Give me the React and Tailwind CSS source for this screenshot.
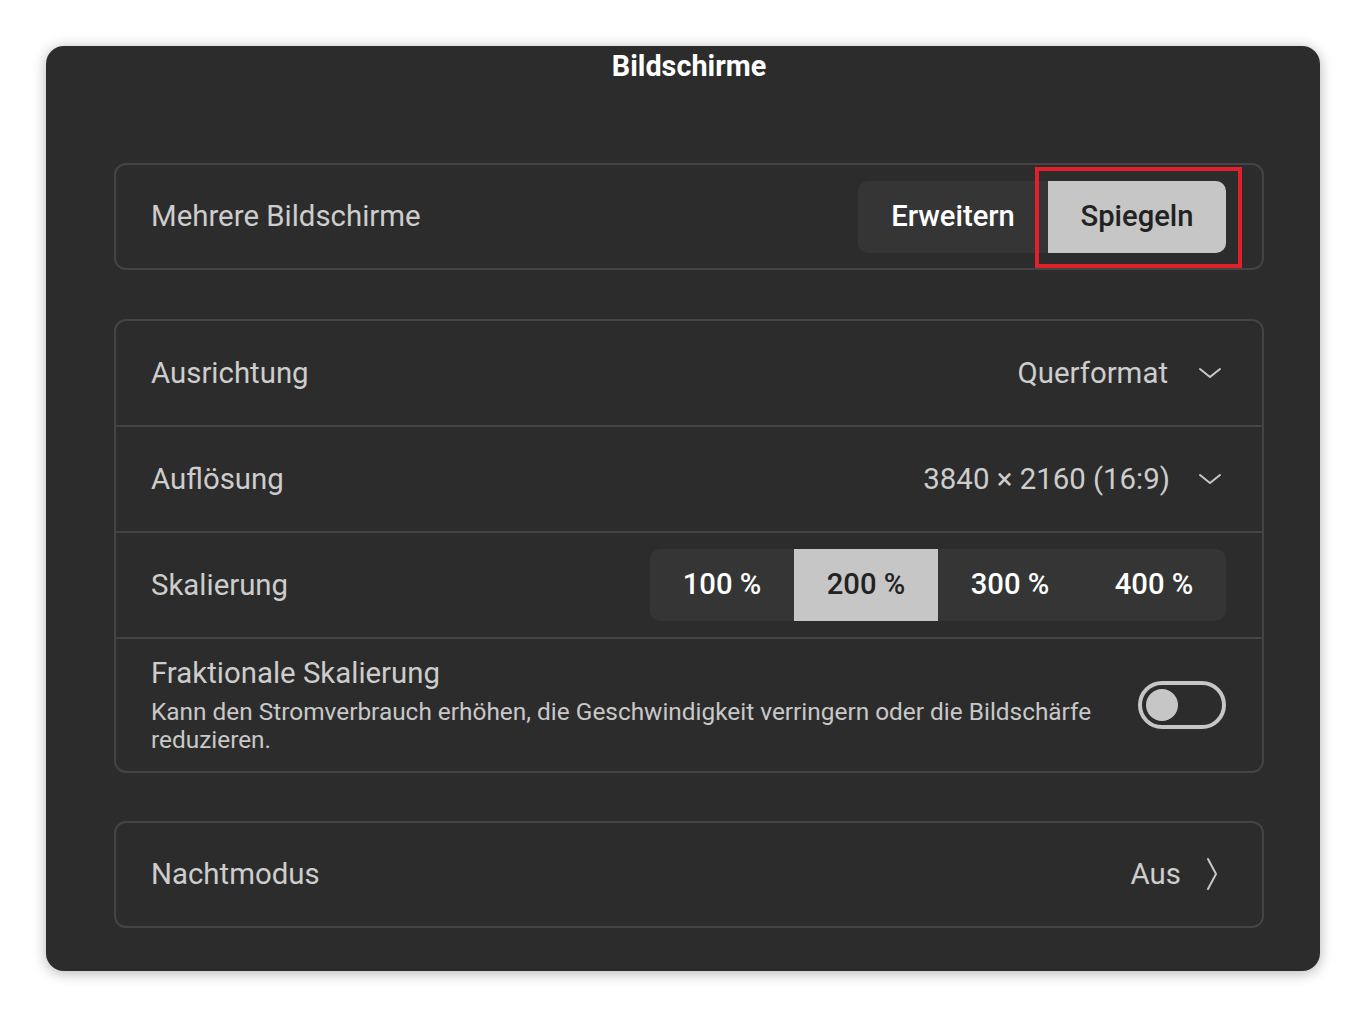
const ChevronDown = () => (
  <svg width="24" height="14" viewBox="0 0 24 14" fill="none" className="shrink-0">
    <path d="M2 3 L12 11 L22 3" stroke="#c8c8c8" strokeWidth="2" strokeLinecap="round" strokeLinejoin="round" />
  </svg>
);

const ChevronRight = () => (
  <svg width="14" height="34" viewBox="0 0 14 34" fill="none" className="shrink-0">
    <path d="M3 2 L11 17 L3 32" stroke="#c8c8c8" strokeWidth="2" strokeLinecap="round" strokeLinejoin="round" />
  </svg>
);

const Row = ({ label, children, last }) => (
  <div className={`h-[106px] flex items-center justify-between pl-[35px] pr-[36px] ${last ? '' : 'border-b-2 border-[#444444]'}`}>
    <span className="text-[29.4px] text-[#cdcdcd]">{label}</span>
    {children}
  </div>
);

const scales = ['100 %', '200 %', '300 %', '400 %'];

export default function App() {
  return (
    <div className="min-h-[1018px] bg-white pt-[46px] px-[46px]" style={{ fontFamily: 'Roboto, "Noto Sans", sans-serif' }}>
      <div className="w-[1274px] h-[925px] bg-[#2c2c2c] rounded-[18px] shadow-[0_2px_14px_rgba(0,0,0,0.3)] flex flex-col pl-[68px] pr-[56px]">
        <div className="h-[42px] flex items-center justify-center">
          <span className="text-[28.8px] font-bold text-white">Bildschirme</span>
        </div>

        <div className="mt-[75px] border-2 border-[#444444] rounded-[12px] h-[107px] flex items-center justify-between pl-[35px] pr-[36px]">
          <span className="text-[29.4px] text-[#cdcdcd]">Mehrere Bildschirme</span>
          <div className="relative flex h-[72px] rounded-[10px] bg-[#353535]">
            <div className="w-[190px] flex items-center justify-center text-[29.2px] font-medium text-white">Erweitern</div>
            <div className="w-[178px] flex items-center justify-center text-[29.2px] font-medium text-[#222222] bg-[#c6c6c6] rounded-r-[10px]">Spiegeln</div>
            <div className="absolute left-[177px] top-[-14px] w-[207px] h-[101px] border-4 border-[#e0202a]" />
          </div>
        </div>

        <div className="mt-[49px] border-2 border-[#444444] rounded-[12px] flex flex-col">
          <Row label="Ausrichtung">
            <div className="flex items-center gap-[30px] pr-[4px]">
              <span className="text-[29.4px] text-[#cdcdcd]">Querformat</span>
              <ChevronDown />
            </div>
          </Row>
          <Row label="Auflösung">
            <div className="flex items-center gap-[28px] pr-[4px]">
              <span className="text-[29.4px] text-[#cdcdcd]">3840 × 2160 (16:9)</span>
              <ChevronDown />
            </div>
          </Row>
          <Row label="Skalierung">
            <div className="flex h-[72px] rounded-[10px] bg-[#353535] overflow-hidden">
              {scales.map((s) => (
                <div
                  key={s}
                  className={`w-[144px] flex items-center justify-center text-[29.2px] font-medium ${s === '200 %' ? 'bg-[#c6c6c6] text-[#222222]' : 'text-white'}`}
                >
                  {s}
                </div>
              ))}
            </div>
          </Row>
          <div className="h-[132px] flex items-center justify-between pl-[35px] pr-[36px]">
            <div className="flex flex-col">
              <span className="text-[29.4px] leading-[34px] text-[#cdcdcd]">Fraktionale Skalierung</span>
              <span className="mt-[8px] text-[24.4px] leading-[28px] text-[#c8c8c8] w-[960px]">
                Kann den Stromverbrauch erhöhen, die Geschwindigkeit verringern oder die Bildschärfe reduzieren.
              </span>
            </div>
            <div className="w-[88px] h-[48px] rounded-full border-4 border-[#c6c6c6] flex items-center pl-[4px] shrink-0">
              <div className="w-[32px] h-[32px] rounded-full bg-[#c6c6c6]" />
            </div>
          </div>
        </div>

        <div className="mt-[48px] border-2 border-[#444444] rounded-[12px] h-[107px] flex items-center justify-between pl-[35px] pr-[43px]">
          <span className="text-[29.4px] text-[#cdcdcd]">Nachtmodus</span>
          <div className="flex items-center gap-[24px]">
            <span className="text-[29.4px] text-[#cdcdcd]">Aus</span>
            <ChevronRight />
          </div>
        </div>
      </div>
    </div>
  );
}
